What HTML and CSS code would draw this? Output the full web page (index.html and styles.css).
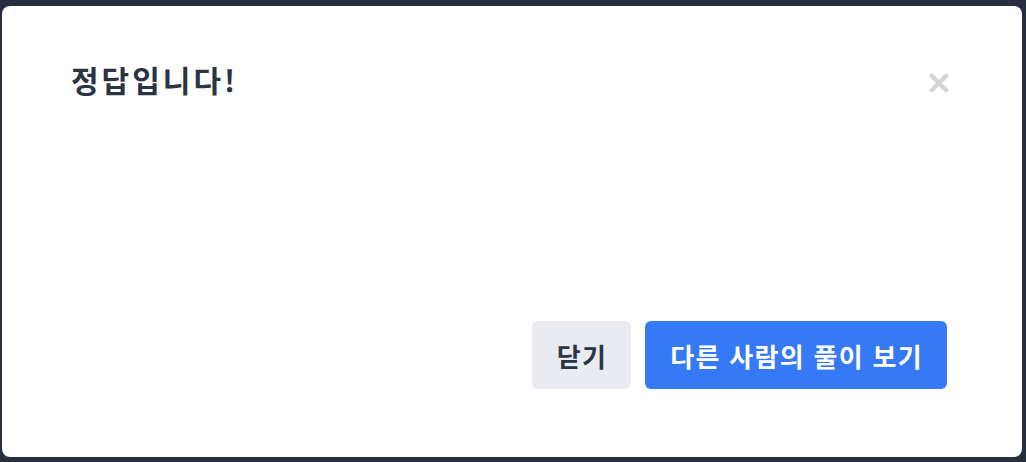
FILE: index.html
```html
<!DOCTYPE html>
<html lang="ko">
<head>
  <meta charset="UTF-8" />
  <title>정답입니다!</title>
  <link rel="stylesheet" href="styles.css">
</head>
<body>

  <div class="overlay">
    <div class="modal">
      <div class="modal-head">
        <h2 class="modal-title">정답입니다!</h2>
        <button class="close" aria-label="닫기">
          <svg width="22" height="22" viewBox="0 0 22 22">
            <path d="M2.5 2.5 L19.5 19.5 M19.5 2.5 L2.5 19.5" stroke="#d4d4d6" stroke-width="4.4" fill="none"/>
          </svg>
        </button>
      </div>
      <div class="modal-body"></div>
      <div class="modal-foot">
        <button class="btn btn-grey">닫기</button>
        <button class="btn btn-blue">다른 사람의 풀이 보기</button>
      </div>
    </div>
  </div>

</body>
</html>
```

FILE: styles.css
```css
html, body { margin: 0; height: 100%; }
body {
  background: #272e3f;
  font-family: "Noto Sans CJK KR", "Noto Sans", sans-serif;
  overflow: hidden;
}
.overlay {
  height: 100%;
  padding: 6px 4px 5px 2px;
  box-sizing: border-box;
}
.modal {
  height: 100%;
  background: #fff;
  border-radius: 8px;
  box-sizing: border-box;
  padding: 55px 75px 68px 69px;
  display: flex;
  flex-direction: column;
}
.modal-head {
  display: flex;
  justify-content: space-between;
  align-items: flex-start;
}
.modal-title {
  margin: 0;
  font-size: 30px;
  line-height: 36px;
  font-weight: 700;
  letter-spacing: 3px;
  color: #2b3444;
}
.close {
  border: 0;
  background: none;
  padding: 0;
  margin: 11px -3px 0 0;
  cursor: pointer;
  line-height: 0;
}
.modal-body { flex: 1; }
.modal-foot {
  display: flex;
  justify-content: flex-end;
  gap: 14px;
}
.btn {
  height: 68px;
  padding: 0 24px 0 25px;
  border: 0;
  border-radius: 6px;
  font-family: inherit;
  font-size: 26px;
  font-weight: 700;
  letter-spacing: 1.3px;
  cursor: pointer;
}
.btn-grey { background: #e9ebf0; color: #2b3444; }
.btn-blue { background: #3679f6; color: #fff; }
```
